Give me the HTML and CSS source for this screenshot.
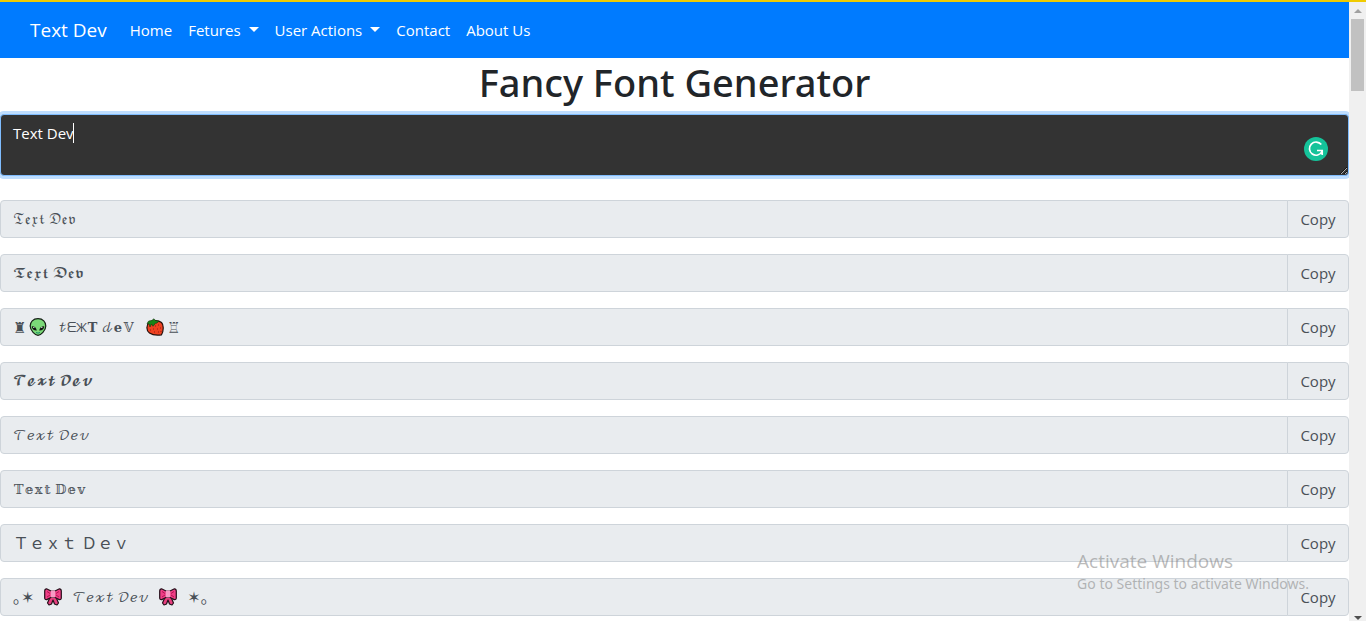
FILE: index.html
```html
<!DOCTYPE html>
<html lang="en">
<head>
<meta charset="utf-8">
<meta name="viewport" content="width=device-width, initial-scale=1">
<title>Fancy Font Generator</title>
<link rel="stylesheet" href="styles.css">
</head>
<body>
<svg class="defs" aria-hidden="true">
  <symbol id="bow" viewBox="0 0 18 18">
    <path d="M6.500 8 3.500 15l1.500 2 2.500-1L9 12l1.500 4 2.500 1 1.500-2-3-7z" fill="#e83e7f" stroke="#25101a" stroke-width="1.200" stroke-linejoin="round"/>
    <path d="M7 3 2.500.8Q.8.8.7 3v7q.1 2 2 1.600L7 9.500h4l4.300 2.100q1.900.4 2-1.600V3q-.1-2.200-1.800-2.200L11 3z" fill="#ef3f86" stroke="#25101a" stroke-width="1.200" stroke-linejoin="round"/>
    <path d="M3 3.500l3 2M3 9l3-2M15 3.500l-3 2M15 9l-3-2" stroke="#b41453" stroke-width="1"/>
    <rect x="6.800" y="2.500" width="4.400" height="7" rx="1" fill="#f79ac4"/>
  </symbol>
</svg>
<div class="window">
  <div class="page">
    <nav class="navbar">
      <a class="brand" href="#">Text Dev</a>
      <a class="nav-link" href="#">Home</a>
      <a class="nav-link dropdown" href="#">Fetures</a>
      <a class="nav-link dropdown" href="#">User Actions</a>
      <a class="nav-link" href="#">Contact</a>
      <a class="nav-link" href="#">About Us</a>
    </nav>
    <main>
      <h1>Fancy Font Generator</h1>
      <div class="editor">
        <textarea class="source" rows="2" aria-label="Your text" spellcheck="false">Text Dev</textarea>
        <span class="caret"></span>
        <svg class="checker" viewBox="0 0 24 24" aria-hidden="true">
          <circle cx="12" cy="12" r="12" fill="#15c39a"/>
          <path d="M17.300 7.600A6.600 6.600 0 1 0 18 14.500M13 13.500h5.200v4.500" fill="none" stroke="#fff" stroke-width="1.700"/>
        </svg>
      </div>
      <div class="row"><input class="field fancy" readonly aria-label="Fraktur" value="𝔗𝔢𝔵𝔱 𝔇𝔢𝔳"><button class="copy">Copy</button></div>
      <div class="row"><input class="field fancy" readonly aria-label="Bold Fraktur" value="𝕿𝖊𝖝𝖙 𝕯𝖊𝖛"><button class="copy">Copy</button></div>
      <div class="row">
        <div class="field mixed">
          <span class="rook">♜</span>
          <svg class="emoji" viewBox="0 0 18 18" aria-hidden="true">
            <path d="M9 .7C4 .7 1.200 4 1.200 8c0 4.600 5 9.300 7.800 9.300s7.800-4.700 7.800-9.300C16.800 4 14 .7 9 .7z" fill="#7bd978" stroke="#152015" stroke-width="1.200"/>
            <path d="M2.800 8.200q4.200-.2 5 4.300-4.600.2-5-4.300zM15.200 8.200q-4.200-.2-5 4.300 4.600.2 5-4.300z" fill="#101510"/>
            <path d="M4.200 9.400h1.200M12.200 9.400h1.200" stroke="#fff"/>
            <path d="M7 14.500q2 1.300 4 0" fill="none" stroke="#168b68"/>
          </svg>
          <span class="words">𝓉ᗴЖ𝐓 𝒹𝐞𝕍</span>
          <svg class="emoji" viewBox="0 0 18 18" aria-hidden="true">
            <path d="M3 4.500C.3 7-.1 12.500 3.500 15c3 2 7.500 2.500 12 1.800C17.600 13 18 7 15.500 4.500 12.500 2 6 2 3 4.500z" fill="#ef4120" stroke="#25100c" stroke-width="1.200"/>
            <path d="M1 5.500 2.700 3l3-.5L8 .8l1.300 1.600 3.700.8-2.300 2-1-.2L7 8.300 5.500 6 4 9 3 6z" fill="#188418" stroke="#17320f" stroke-width=".6"/>
            <path d="M9 8h1M12 7h1M14 10h1M11 11h1M7 11h1M4 12h1M8 14h1M12 14h1M14.500 13.500h1" stroke="#941d14" stroke-width="1.200"/>
          </svg>
          <span class="rook">♖</span>
        </div>
        <button class="copy">Copy</button>
      </div>
      <div class="row"><input class="field script-bold" readonly aria-label="Bold script" value="𝓣𝓮𝔁𝓽 𝓓𝓮𝓿"><button class="copy">Copy</button></div>
      <div class="row"><input class="field fancy" readonly aria-label="Script" value="𝒯𝑒𝓍𝓉 𝒟𝑒𝓋"><button class="copy">Copy</button></div>
      <div class="row"><input class="field fancy" readonly aria-label="Double struck" value="𝕋𝕖𝕩𝕥 𝔻𝕖𝕧"><button class="copy">Copy</button></div>
      <div class="row"><input class="field" readonly aria-label="Full width" value="Ｔｅｘｔ Ｄｅｖ"><button class="copy">Copy</button></div>
      <div class="row">
        <div class="field ribbon">
          <span>｡✶</span>
          <svg class="emoji" aria-hidden="true"><use href="#bow"/></svg>
          <span class="script">𝒯𝑒𝓍𝓉 𝒟𝑒𝓋</span>
          <svg class="emoji" aria-hidden="true"><use href="#bow"/></svg>
          <span>✶｡</span>
        </div>
        <button class="copy">Copy</button>
      </div>
    </main>
  </div>
  <div class="scrollbar" aria-hidden="true">
    <span class="arrow up"></span>
    <span class="thumb"></span>
    <span class="arrow down"></span>
  </div>
</div>
<aside class="watermark">
  <p class="watermark-title">Activate Windows</p>
  <p class="watermark-text">Go to Settings to activate Windows.</p>
</aside>
</body>
</html>
```
FILE: styles.css
```css
* { box-sizing: border-box; }
body {
  margin: 0;
  height: 100vh;
  overflow: hidden;
  font: 15px/24px "Open Sans", "Noto Sans", sans-serif;
  color: #212529;
  background: #fff;
}
.defs { display: none; }
.window {
  display: flex;
  height: 100vh;
  border-top: 2px solid #f0cb00;
}
.page { flex: 1; min-width: 0; overflow: hidden; }
.navbar {
  display: flex;
  align-items: center;
  height: 56px;
  padding: 0 30px;
  background: #007bff;
}
.navbar a { color: #fff; text-decoration: none; white-space: nowrap; }
.brand { margin-right: 15px; font-size: 19px; }
.nav-link { padding: 8px; }
.dropdown::after {
  content: "";
  display: inline-block;
  margin-left: 8px;
  vertical-align: 4px;
  border: 5px solid transparent;
  border-top-color: #fff;
  border-bottom: 0;
}
h1 {
  margin: 0 0 8px;
  padding-top: 1px;
  font: 500 38px/47px "Noto Sans", "Open Sans", sans-serif;
  text-align: center;
}
.editor { position: relative; margin-bottom: 24px; }
.source {
  display: block;
  width: 100%;
  height: 62px;
  padding: 6px 12px;
  font: inherit;
  color: #fff;
  background: #333;
  border: 1px solid #80bdff;
  border-radius: 4px;
  outline: 0;
  box-shadow: 0 0 0 3px #bfdeff;
  resize: vertical;
}
.caret {
  position: absolute;
  top: 9px;
  left: 73px;
  width: 1px;
  height: 20px;
  background: #fff;
}
.checker {
  position: absolute;
  top: 23px;
  right: 21px;
  width: 24px;
  height: 24px;
}
.row { display: flex; height: 38px; margin-bottom: 16px; }
.field {
  flex: 1;
  min-width: 0;
  padding: 6px 12px;
  font: 16px/24px "Open Sans", "DejaVu Math TeX Gyre", "DejaVu Serif", "DejaVu Sans", "Noto Sans CJK JP", sans-serif;
  color: #495057;
  background: #e9ecef;
  border: 1px solid #ced4da;
  border-radius: 4px 0 0 4px;
  outline: 0;
}
.fancy, .script { font-size: 13px; }
.script-bold { font-size: 12px; }
.mixed, .ribbon { display: flex; align-items: center; white-space: pre; }
.emoji { width: 18px; height: 18px; flex: none; }
.mixed { gap: 3px; }
.rook { font-size: 15px; }
.words { margin: 0 8px; font-size: 13px; }
.ribbon { gap: 10px; }
.copy {
  width: 62px;
  margin-left: -1px;
  padding: 0;
  font: inherit;
  color: #495057;
  background: #e9ecef;
  border: 1px solid #ced4da;
  border-radius: 0 4px 4px 0;
}
.scrollbar {
  display: flex;
  flex-direction: column;
  align-items: center;
  width: 17px;
  padding: 7px 0 1px;
  background: #f0f0f0;
}
.arrow { border: 4px solid transparent; }
.up { border-top: 0; border-bottom-color: #a0a0a0; }
.down { margin-top: auto; border-bottom: 0; border-top-color: #505050; }
.thumb { width: 13px; height: 72px; margin-top: 6px; background: #c1c1c1; }
.watermark {
  position: absolute;
  right: 57px;
  bottom: 26px;
  color: rgba(120, 120, 120, .5);
  pointer-events: none;
}
.watermark p { margin: 0; white-space: nowrap; }
.watermark-title { font-size: 19px; }
.watermark-text { font: 14px/22px "Noto Sans", sans-serif; }
```
